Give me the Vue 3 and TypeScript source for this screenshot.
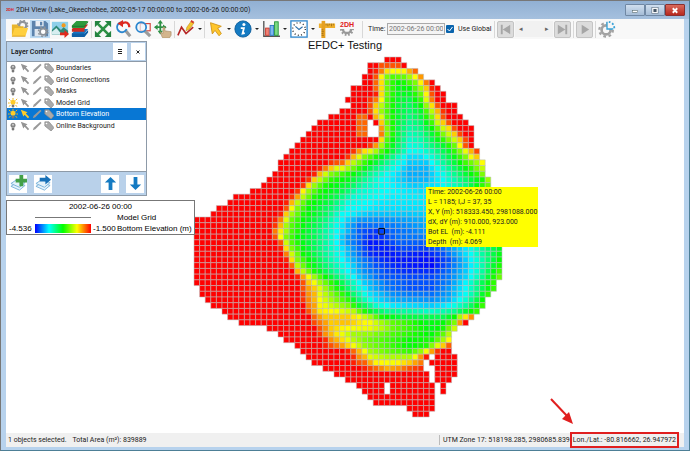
<script setup lang="ts">
import { computed, ref } from 'vue'

interface Cell { x: number; y: number; fill: string }
interface Layer { name: string; visible: boolean; active: boolean }

const useGlobal = ref(true)
const time = ref('2002-06-26 00:00')
const selected = ref('Bottom Elevation')

const layers = ref<Layer[]>([
  { name: 'Boundaries', visible: false, active: false },
  { name: 'Grid Connections', visible: false, active: false },
  { name: 'Masks', visible: false, active: false },
  { name: 'Model Grid', visible: true, active: false },
  { name: 'Bottom Elevation', visible: true, active: true },
  { name: 'Online Background', visible: false, active: false },
])

const readout = [
  'Time: 2002-06-26 00:00',
  'L = 1185; I,J = 37, 35',
  'X, Y (m): 518333.450, 2981088.000',
  'dX, dY (m): 910.000, 923.000',
  'Bot EL  (m): -4.111',
  'Depth  (m): 4.069',
]

// One line per grid row: first column, last column, then column:elevation stops (0 = deepest, 100 = shallowest).
const rows = `34 36 34:100
31 37 32:100 33:92 36:92 37:100
31 39 31:100 32:97 33:88 34:78 35:75 37:76 38:83 39:90
30 40 31:100 32:92 33:76 34:62 35:58 37:60 38:66 39:75 40:85
30 42 31:100 32:90 33:78 34:60 35:54 36:50 37:52 39:62 40:76 41:88 42:100
28 43 31:100 32:90 33:78 34:60 36:48 38:50 40:66 41:80 42:97 43:100
28 44 31:100 32:97 33:78 34:60 36:47 38:47 40:60 41:76 42:92 43:100
27 44 30:100 31:95 32:88 33:75 34:58 36:46 38:43 40:55 41:72 42:88 43:100
28 46 30:100 31:93 32:80 33:68 34:58 36:45 38:41 40:50 42:78 43:92 44:100
26 46 30:100 31:92 32:78 33:65 34:57 36:45 38:40 40:46 42:68 43:82 44:95 45:100
24 47 28:100 29:90 30:90 31:100 32:82 33:72 34:58 36:46 38:38 40:44 42:62 43:78 44:92 45:100
22 48 28:100 29:90 30:90 31:100 32:100 33:80 34:60 36:44 38:36 40:40 42:56 43:70 44:80 45:92 46:100
21 49 28:100 29:90 30:90 32:90 33:85 34:62 36:43 38:34 40:38 42:50 43:60 44:70 45:78 46:92 47:100
20 49 28:100 29:90 30:90 32:90 33:88 34:62 36:43 38:32 40:35 42:45 44:62 45:70 46:80 47:93 48:100
19 49 32:100 33:78 34:57 36:42 38:30 40:33 42:42 44:54 46:70 47:80 48:93 49:100
18 49 30:100 31:95 32:85 33:66 34:54 36:40 38:28 40:30 42:38 44:46 46:60 47:75 48:92 49:100
17 50 27:100 28:95 29:85 30:78 31:72 32:66 33:57 35:44 38:26 40:27 42:33 45:46 47:62 48:73 49:82 50:93
16 50 26:100 27:95 28:82 29:72 30:62 33:48 36:31 38:22 40:22 43:33 46:48 48:62 49:74 50:80
15 51 23:100 24:95 25:92 26:90 27:80 28:68 30:55 32:45 35:31 38:20 41:20 43:30 46:44 48:56 50:66 51:75
15 51 21:100 22:97 23:88 24:80 25:72 26:72 27:66 28:60 30:48 33:34 36:24 38:18 41:18 43:26 46:40 49:54 51:69
14 51 20:100 21:97 22:82 23:70 24:62 26:56 28:49 31:36 34:26 38:17 41:17 44:27 47:40 50:54 51:62
13 52 19:100 20:95 21:80 22:68 24:54 27:48 30:36 33:26 38:18 41:18 44:26 48:40 51:52 52:65
12 52 18:100 19:95 20:78 21:64 23:52 27:44 30:32 34:25 39:20 43:23 48:37 52:60
10 53 17:100 18:95 19:76 20:64 22:52 26:43 29:30 34:25 40:22 45:27 50:40 53:60
7 53 16:100 17:95 18:84 19:68 21:52 25:42 28:29 34:24 41:23 46:28 53:58
6 53 15:100 16:97 17:82 18:68 20:52 24:42 27:28 33:23 41:23 46:28 53:55
4 54 15:100 16:92 17:74 18:62 20:50 24:39 27:26 33:22 41:22 46:28 54:55
3 54 14:100 15:97 16:80 17:66 19:52 23:41 26:26 31:19 40:20 46:26 54:52
0 54 13:100 14:97 15:88 16:72 17:60 19:50 23:38 26:24 29:15 33:14 40:17 46:25 54:50
0 54 13:100 14:95 15:82 16:66 17:58 19:49 22:40 25:27 27:18 29:11 33:11 38:14 43:19 48:28 54:50
0 54 13:100 14:88 15:77 16:66 17:57 19:48 22:38 25:26 27:18 29:9 32:5 35:10 39:13 43:17 48:26 54:49
0 54 13:100 14:92 15:75 16:62 18:50 21:42 24:30 27:15 29:10 31:4 33:5 36:11 40:12 44:16 48:25 54:48
0 54 14:100 15:92 16:70 17:58 19:48 22:38 24:30 27:15 29:9 31:2 33:3 36:9 40:9 44:14 48:24 54:47
0 54 14:100 15:97 16:78 17:62 19:49 22:38 25:27 28:14 31:3 34:3 37:7 41:6 44:11 48:23 51:35 54:47
0 54 15:100 16:88 17:70 19:51 22:39 25:28 28:15 31:4 34:2 37:4 41:2 44:8 48:22 51:34 54:48
0 54 15:100 16:97 17:78 18:62 20:50 23:37 26:25 29:14 32:6 35:2 39:2 42:1 45:8 48:20 51:33 54:50
0 54 16:100 17:90 18:68 20:52 23:39 26:28 29:16 32:8 35:4 39:2 42:1 45:9 48:19 51:33 54:52
0 54 17:100 18:82 19:68 21:52 24:38 27:25 30:14 34:7 38:4 42:4 45:11 48:20 51:34 54:56
0 54 17:100 18:97 19:84 20:74 21:65 23:50 26:34 29:20 33:9 38:7 42:7 45:12 48:21 51:36 54:60
0 53 18:100 19:92 20:80 21:74 22:66 24:54 27:36 30:20 34:11 38:8 42:8 45:13 48:24 51:42 53:54
1 53 18:100 19:92 20:84 21:80 22:72 24:58 26:46 28:33 31:19 34:12 38:8 42:8 45:15 48:25 51:42 53:55
1 52 18:100 19:95 20:86 21:82 22:73 24:63 26:54 28:39 31:22 35:14 38:12 42:11 45:16 48:26 50:38 52:54
2 51 18:100 19:95 20:87 21:82 22:75 24:66 27:54 29:38 32:22 35:17 42:14 45:18 48:29 51:50
3 51 19:100 20:88 21:84 22:76 24:70 27:62 29:46 32:30 35:23 42:20 45:24 48:34 51:55
5 50 19:100 20:92 21:84 22:77 25:74 28:68 29:60 31:46 34:36 38:34 42:30 46:36 50:55
6 49 20:100 21:90 22:84 23:80 27:80 29:74 31:66 33:52 36:45 40:43 44:42 46:50 47:66 48:77 49:86
8 48 20:100 21:93 23:84 24:80 27:81 29:77 31:74 33:66 35:59 38:54 41:48 44:49 46:62 47:85 48:100
13 46 21:100 22:92 24:80 26:76 28:74 31:73 33:68 35:60 38:55 42:48 44:52 46:70
15 45 21:100 22:95 23:86 25:77 28:66 31:64 35:57 40:51 42:49 44:59 45:68
16 45 22:100 23:96 24:86 26:78 28:68 30:62 35:55 38:50 42:52 44:66 45:75
18 45 22:100 23:97 24:92 26:84 28:74 30:64 34:57 38:49 41:53 43:72 44:80 45:91
19 45 26:100 27:97 28:90 29:82 30:74 31:66 34:60 38:55 40:64 41:74 42:84 43:95 44:100
20 46 27:100 28:96 29:86 30:82 31:72 34:67 38:67 39:74 40:85 41:98 42:100
21 46 27:100 28:97 29:92 30:91 31:83 32:76 35:74 38:80 40:88 42:100
23 46 29:100 30:97 32:90 34:83 36:86 38:92 40:96 42:100
25 46 25:100
27 45 27:100
29 44 29:100
30 44 30:100
31 42 31:100
32 42 32:100
38 42 38:100
39 41 39:100`.split('\n')

// Dry cells inside the lake outline, as row,column.
const dry = new Set([
  '11,31', '12,31', '12,32', '13,31', '13,32', '52,42', '53,41', '54,41', '54,42',
  '55,42', '56,42', '57,34', '58,34', '57,43', '58,43',
])

function elevation(stops: number[][], x: number): number {
  if (x <= stops[0][0]) return stops[0][1]
  for (let i = 1; i < stops.length; i++) {
    const [x1, v1] = stops[i]
    const [x0, v0] = stops[i - 1]
    if (x <= x1) return v0 + ((v1 - v0) * (x - x0)) / (x1 - x0)
  }
  return stops[stops.length - 1][1]
}

const cells = computed<Cell[]>(() =>
  rows.flatMap((line, y) => {
    const [first, last, ...rest] = line.split(' ')
    const stops = rest.map(s => s.split(':').map(Number))
    const out: Cell[] = []
    for (let x = Number(first); x <= Number(last); x++) {
      if (dry.has(`${y},${x}`)) continue
      const hue = 240 - 2.4 * elevation(stops, x)
      out.push({ x, y, fill: `hsl(${hue.toFixed(0)} 100% 50%)` })
    }
    return out
  }),
)
</script>

<template>
  <div class="window">
    <header class="titlebar">
      <span class="logo">2DH</span>
      <h1>2DH View (Lake_Okeechobee, 2002-05-17 00:00:00 to 2002-06-26 00:00:00)</h1>
      <div class="winbtns">
        <button aria-label="Minimize"><svg viewBox="0 0 20 10"><rect x="7" y="5" width="6" height="2" fill="#fff" stroke="#566" stroke-width=".6" /></svg></button>
        <button aria-label="Maximize"><svg viewBox="0 0 20 10"><rect x="7.500" y="2.500" width="5" height="5" fill="#456" stroke="#fff" stroke-width="1.500" /><rect x="6.500" y="1.500" width="7" height="7" fill="none" stroke="#567" stroke-width=".6" /></svg></button>
        <button class="close" aria-label="Close"><svg viewBox="0 0 20 10"><path d="M7.500 2.500l5 5m0-5l-5 5" stroke="#fff" stroke-width="2" /></svg></button>
      </div>
    </header>

    <div class="toolbar">
      <button class="tool" aria-label="Open">
        <svg viewBox="0 0 20 20"><circle cx="13" cy="6" r="4" fill="none" stroke="#909498" stroke-width="2.500" /><circle cx="13" cy="6" r="5.600" fill="none" stroke="#909498" stroke-width="1.500" stroke-dasharray="2 2.400" /><path d="M1 17V5h6l1.500 2H14v3" fill="#e9b52c" /><path d="M1 18L4 9h15l-3 9z" fill="#ffcf3e" /><path d="M1 18h15" stroke="#d79b1a" /></svg>
      </button>
      <button class="tool on" aria-label="Save">
        <svg viewBox="0 0 20 20"><path d="M1 1h15l3 3v14H1z" fill="#5b83ad" /><rect x="5" y="1" width="9" height="6" fill="#e8eef5" /><rect x="10" y="2" width="2.500" height="4" fill="#5b83ad" /><rect x="4" y="10" width="12" height="8" fill="#dde6ef" /><circle cx="13.500" cy="13" r="3.500" fill="#fff" stroke="#8b9299" stroke-width="2" /><circle cx="13.500" cy="13" r="5.300" fill="none" stroke="#8b9299" stroke-width="1.500" stroke-dasharray="2 2.200" /></svg>
      </button>
      <button class="tool" aria-label="Export image">
        <svg viewBox="0 0 20 20"><path d="M1 2h18v14H1z" fill="#8fd0ea" /><circle cx="14" cy="6" r="2.300" fill="#f59a1d" /><path d="M1 16v-5l5-5 5 5 3-3 5 4v4z" fill="#2f8a78" /><path d="M1 13l5-4 6 7H1z" fill="#d7eef0" /><path d="M10 14h5v-3l5 4.500-5 4.500v-3h-5z" fill="#e0281c" /></svg>
      </button>
      <button class="tool" aria-label="Layers">
        <svg viewBox="0 0 20 20"><path d="M1 15l5-5h13l-4 5v3H1z" fill="#1676c4" /><path d="M1 15h14l4-4v3l-4 5H1z" fill="#0d5ea5" /><path d="M1 10l5-5h13l-4 5v3H1z" fill="#c92d23" /><path d="M1 6l5-5h13l-4 6v2H1z" fill="#2d9a3d" /><path d="M1 7h14l4-5" fill="none" stroke="#1b7430" /></svg>
      </button>
      <i class="sep"></i>
      <button class="tool" aria-label="Fit view">
        <svg viewBox="0 0 20 20"><path d="M4 4l12 12M16 4L4 16" stroke="#2d9145" stroke-width="3" /><path d="M1 1h7L1 8zM19 1v7l-7-7zM1 19v-7l7 7zM19 19h-7l7-7z" fill="#238340" /></svg>
      </button>
      <button class="tool" aria-label="Zoom previous">
        <svg viewBox="0 0 20 20"><path d="M13 12l5 6" stroke="#9b9b9b" stroke-width="3.500" /><path d="M11 3a5.500 5.500 0 1 0 3 7" fill="none" stroke="#2b86cf" stroke-width="2" /><path d="M9 4c4-3 8-1 8 4" fill="none" stroke="#dd281e" stroke-width="2.500" /><path d="M10 0v8L4 4z" fill="#dd281e" /></svg>
      </button>
      <button class="tool" aria-label="Zoom window">
        <svg viewBox="0 0 20 20"><rect x="7" y="4" width="11" height="8" fill="none" stroke="#d5483f" stroke-width="1.300" /><path d="M12 12l6 6" stroke="#9b9b9b" stroke-width="3.500" /><circle cx="8" cy="8" r="5.500" fill="#eef6fc" fill-opacity=".7" stroke="#2b86cf" stroke-width="2" /></svg>
      </button>
      <button class="tool" aria-label="Pan">
        <svg viewBox="0 0 20 20"><path d="M7 2v12M1 8h12" stroke="#2d9145" stroke-width="2" /><path d="M7 0l3 4H4zM7 16l3-4H4zM0 8l4-3v6zM14 8l-4-3v6z" fill="#2d9145" /><path d="M9 19l-2-6 3 2V8l2 0v4l7 1v4l-2 3h-7z" fill="#d3b58d" stroke="#a98c68" stroke-width=".7" /></svg>
      </button>
      <i class="sep"></i>
      <button class="tool" aria-label="Draw polyline">
        <svg viewBox="0 0 20 20"><path d="M1 17L5 8l5 7 8-7" fill="none" stroke="#b52525" stroke-width="1.800" /><path d="M10 12l1-4 5-7 3 2-5 7z" fill="#f5c52c" stroke="#b88718" stroke-width=".6" /><path d="M15 2l1-2 3 2-1 2z" fill="#d33a2f" /></svg>
      </button>
      <button class="drop" aria-label="Polyline options"></button>
      <i class="sep tight"></i>
      <button class="tool" aria-label="Select">
        <svg viewBox="0 0 20 20"><path d="M5 3l12 4-4 2 4 6-2.500 2.500-4.500-6-3 4z" fill="#ffc62b" stroke="#cf941a" /></svg>
      </button>
      <button class="drop" aria-label="Select options"></button>
      <button class="tool" aria-label="Information">
        <svg viewBox="0 0 20 20"><circle cx="10" cy="10" r="9" fill="#147ac2" stroke="#0b5c9b" /><circle cx="11" cy="5" r="1.700" fill="#fff" /><path d="M7.500 9h3.500l-1.500 6 2.500-.5" fill="none" stroke="#fff" stroke-width="2" /></svg>
      </button>
      <button class="drop" aria-label="Information options"></button>
      <button class="tool" aria-label="Charts">
        <svg viewBox="0 0 20 20"><path d="M2 1v17h18" fill="none" stroke="#555" stroke-width="1.500" /><rect x="4" y="9" width="4" height="8" fill="#ef8376" stroke="#c7372b" /><rect x="9" y="6" width="4" height="11" fill="#7eb7ef" stroke="#2675c4" /><rect x="14" y="2" width="4" height="15" fill="#7ddb83" stroke="#239138" /></svg>
      </button>
      <button class="drop" aria-label="Chart options"></button>
      <button class="tool" aria-label="Clock">
        <svg viewBox="0 0 20 20"><rect x="1" y="1" width="18" height="18" fill="#fff" stroke="#3389cf" stroke-width="1.500" /><circle cx="10" cy="10" r="7" fill="none" stroke="#333" stroke-width="1.600" stroke-dasharray="1.100 2.565" /><path d="M6 7l4 3.500 4-3" fill="none" stroke="#2c6ea8" stroke-width="1.200" /></svg>
      </button>
      <button class="drop" aria-label="Clock options"></button>
      <button class="tool" aria-label="Measure">
        <svg viewBox="0 0 20 20"><path d="M1 4h18v5H8v11H4V9H1z" fill="#efaf2b" /><path d="M4 1h4v19H4z" fill="#e6a020" /><path d="M9 4v2m2-2v3m2-3v2m2-2v3m2-3v2M4 11h2m-2 2h2.500M4 15h2m-2 2h2.500" stroke="#8f6210" stroke-width=".8" /></svg>
      </button>
      <button class="tool settings" aria-label="2DH settings">
        <b>2DH</b>
        <svg viewBox="0 0 20 11"><path d="M5 0a5 5 0 0 0 10 0" fill="none" stroke="#999" stroke-width="3" /><path d="M3 0a7 7 0 0 0 14 0" fill="none" stroke="#999" stroke-width="3" stroke-dasharray="2 2" /></svg>
      </button>
      <i class="sep wide"></i>
      <label class="time" for="time">Time:</label>
      <input id="time" v-model="time" class="timebox" type="text">
      <label class="global"><input v-model="useGlobal" type="checkbox"><svg viewBox="0 0 8 8"><path d="M1.500 4l2 2 3-4" fill="none" stroke="#fff" /></svg>Use Global</label>
      <i class="sep"></i>
      <button class="play" aria-label="First"><svg viewBox="0 0 16 16"><path d="M3 3h2v10H3zM13 3v10L5 8z" /></svg></button>
      <div class="scroll"><button aria-label="Step back">◂</button><button aria-label="Step forward">▸</button></div>
      <button class="play" aria-label="Last"><svg viewBox="0 0 16 16"><path d="M3 3l8 5-8 5zM11 3h2v10h-2z" /></svg></button>
      <i class="sep"></i>
      <button class="play" aria-label="Play"><svg viewBox="0 0 16 16"><path d="M5 3l8 5-8 5z" /></svg></button>
      <i class="sep"></i>
      <button class="tool" aria-label="Animation settings">
        <svg viewBox="0 0 20 20"><circle cx="9" cy="11" r="5" fill="none" stroke="#a2a2a2" stroke-width="3" /><circle cx="9" cy="11" r="7.500" fill="none" stroke="#a2a2a2" stroke-width="2.500" stroke-dasharray="3 2.900" /><path d="M10 0h10v10H10z" fill="#f6f6f6" /><path d="M10 2v8h7" fill="none" stroke="#37a2d8" stroke-width="1.500" /><path d="M12 2a7 7 0 0 1 6 8" fill="none" stroke="#37a2d8" stroke-width="2" stroke-dasharray="2 2" /></svg>
      </button>
    </div>

    <main class="canvas">
      <section class="plot">
        <h2>EFDC+ Testing</h2>
        <svg class="grid" viewBox="0 0 55 63" preserveAspectRatio="none" role="img" aria-label="Bottom elevation grid">
          <rect v-for="c in cells" :key="`${c.x}-${c.y}`" :x="c.x" :y="c.y" width="1" height="1" :fill="c.fill" />
          <rect class="picked" x="33" y="30" width="1" height="1" />
        </svg>
      </section>

      <div class="readout"><p v-for="line in readout" :key="line">{{ line }}</p></div>

      <aside class="panels">
        <section class="layers">
          <header>
            <h3>Layer Control</h3>
            <button aria-label="Menu"><svg viewBox="0 0 6 6"><path d="M1 .5h4M1 2.500h4M1 4.500h4" stroke="#222" /></svg></button>
            <button aria-label="Close panel"><svg viewBox="0 0 6 6"><path d="M1.500 1.500l3 3m0-3l-3 3" stroke="#222" /></svg></button>
          </header>
          <ul>
            <li v-for="l in layers" :key="l.name" :class="{ selected: l.name === selected }" @click="selected = l.name">
              <svg viewBox="0 0 12 12">
                <path v-if="l.visible" d="M6 0v2M1 1l2 2M11 1L9 3M0 6h2M10 6h2M1 10l2-1M11 10L9 9" stroke="#efb51e" stroke-width="1.200" />
                <circle cx="6" cy="5" r="3" :fill="l.visible ? '#ffcb28' : '#858585'" /><circle v-if="!l.visible" cx="6" cy="4.500" r="1.200" fill="#ccc" />
                <path d="M4.500 8h3v2L6 12l-1.500-2z" fill="#777" />
              </svg>
              <svg viewBox="0 0 12 12"><path d="M1 1l8 3-2 1.500 4 4-1.500 1.500-4-4L4 9z" :fill="l.active ? '#ffcc26' : '#949494'" /></svg>
              <svg viewBox="0 0 12 12"><path d="M1 11l1-3 8-7 1.500 1.500L4 10z" fill="#999" /></svg>
              <svg viewBox="0 0 12 12"><path d="M1 1h5l6 7-3.500 4L1 6z" fill="#aaa" stroke="#888" stroke-width=".8" /><circle cx="3" cy="3" r="1" fill="#fff" /></svg>
              <span>{{ l.name }}</span>
            </li>
          </ul>
          <footer>
            <button aria-label="Add layer"><svg viewBox="0 0 18 18"><path d="M1 12l6-4 9 3-6 5z" fill="#e4f2fb" stroke="#79b3da" /><path d="M1 9l6-4 9 3-6 5z" fill="#e4f2fb" stroke="#79b3da" /><path d="M10 0h4v4h4v4h-4v4h-4V8H6V4h4z" fill="#43a047" /></svg></button>
            <button aria-label="Export layer"><svg viewBox="0 0 18 18"><path d="M1 12l6-4 9 3-6 5z" fill="#e4f2fb" stroke="#79b3da" /><path d="M1 9l6-4 9 3-6 5z" fill="#e4f2fb" stroke="#79b3da" /><path d="M5 3h6V0l6 5-6 5V7H5z" fill="#1670b8" /></svg></button>
            <i class="gap"></i>
            <button aria-label="Move up"><svg viewBox="0 0 18 18"><path d="M9 2l6 6h-4v8H7V8H3z" fill="#147ac2" /></svg></button>
            <button aria-label="Move down"><svg viewBox="0 0 18 18"><path d="M9 16l6-6h-4V2H7v8H3z" fill="#147ac2" /></svg></button>
          </footer>
        </section>

        <section class="legend">
          <p class="stamp">2002-06-26 00:00</p>
          <i class="line"></i><span class="name">Model Grid</span>
          <span class="low">-4.536</span><i class="ramp"></i><span>-1.500</span><span>Bottom Elevation (m)</span>
        </section>
      </aside>
    </main>

    <footer class="status">
      <span>1 objects selected.</span>
      <span class="area">Total Area (m²): 839889</span>
      <span class="utm">UTM Zone 17: 518198.285, 2980685.839</span>
      <span class="lonlat">Lon./Lat.: -80.816662, 26.947972
        <svg class="pointer" viewBox="0 0 24 27"><path d="M1 1l17 18" stroke="#e01f1f" stroke-width="2" /><path d="M23 26l-11-5 7-7z" fill="#e01f1f" /></svg>
      </span>
    </footer>
  </div>
</template>

<style>
body { margin: 0; }
</style>

<style scoped>
* { box-sizing: border-box; }
h1, h2, h3, p, ul { margin: 0; padding: 0; font-weight: 400; }
button { padding: 0; border: 0; background: none; font: inherit; color: inherit; }
svg { display: block; }
.window {
  display: flex; flex-direction: column; min-height: 100vh;
  padding: 0 5px 3px; border: 1px solid #4d7f96; border-top-color: #777; border-left-color: #777;
  background: #b7d2ed; color: #222; font: 7px/10px Roboto, "Noto Sans", sans-serif;
}
.titlebar {
  display: flex; align-items: center; gap: 2px; height: 18px; margin: 0 -5px; padding: 0 4px 0 5px;
  background: linear-gradient(#91b0d3, #a5c0de);
}
.titlebar h1 { flex: 1; font-size: 7px; white-space: nowrap; }
.logo { width: 8px; overflow: hidden; color: #d22; font-size: 4px; font-weight: 700; }
.winbtns { display: flex; align-self: flex-start; padding-top: 3px; }
.winbtns button { width: 20px; height: 12px; border: 1px solid #7088a4; border-radius: 1px; background: linear-gradient(#d0dfef, #a4bcd6); }
.winbtns .close { border-color: #8a3030; background: linear-gradient(#d96a5c, #b8281e); }
.toolbar {
  display: flex; align-items: center; height: 20px; padding: 0 2px 0 4px;
  background: #f8f8f8; white-space: nowrap;
}
.tool { flex: none; width: 20px; height: 18px; padding: 0 1px; }
.tool svg { width: 18px; height: 18px; }
.tool.on { background: #bcdcf5; }
.drop { flex: none; width: 8px; height: 18px; }
.drop::after { content: ""; display: block; width: 0; margin: 0 auto; border: 2px solid transparent; border-top-color: #222; border-bottom: 0; }
.sep { flex: none; width: 1px; height: 17px; margin: 0 1px; background: #d8d8d8; }
.sep.tight { margin: 0; }
.sep.wide { margin: 0 5px; }
.settings b { display: block; color: #e02020; font: 700 7px/8px "Liberation Sans", sans-serif; }
.settings svg { height: 9px; }
.time { width: 19px; }
.timebox { width: 58px; height: 12px; padding: 0 1px; border: 1px solid #aaa; background: #f4f4f4; color: #777; font: inherit; }
.global { position: relative; display: flex; align-items: center; gap: 4px; padding: 0 1px; }
.global input { appearance: none; width: 8px; height: 8px; margin: 0; border-radius: 1px; background: #fff; }
.global input:checked { background: #0a64ad; }
.global svg { position: absolute; left: 1px; width: 8px; height: 8px; pointer-events: none; }
.play { flex: none; width: 17px; height: 17px; margin: 0 1px; border: 1px solid #c4c4c4; border-radius: 2px; background: #dcdcdc; }
.play svg { width: 15px; height: 15px; fill: #a6a6a6; }
.scroll { display: flex; justify-content: space-between; width: 38px; padding: 0 4px; color: #666; background: #f1f1f1; line-height: 16px; }
.canvas { position: relative; flex: 1; background: #fff; }
.plot { display: flex; flex-direction: column; align-items: center; padding-left: 5px; }
.plot h2 { padding-right: 5px; color: #111; font: 11px/12px "Liberation Sans", sans-serif; }
.grid { width: 308px; height: 360px; margin-top: 6px; overflow: visible; }
.grid rect { stroke: #bebebe; stroke-opacity: .55; stroke-width: 1px; vector-effect: non-scaling-stroke; }
.grid .picked { fill: none; stroke: #000; stroke-opacity: 1; }
.readout { position: absolute; top: 148px; left: calc(50% + 81px); width: 112px; padding: 0 2px; background: #ff0; white-space: pre; line-height: 10px; }
.panels { position: absolute; top: 2px; left: 0; }
.layers { width: 141px; border: 1px solid #8d9aa8; background: #fff; }
.layers header { display: flex; align-items: center; gap: 4px; height: 20px; padding: 0 1px 0 4px; border-bottom: 1px solid #8d9aa8; background: #b9d1ea; }
.layers h3 { flex: 1; color: #111; font-size: 7px; font-weight: 500; }
.layers header button { display: grid; place-items: center; width: 14px; height: 17px; background: #fff; }
.layers header svg { width: 6px; height: 6px; }
.layers ul { height: 109px; list-style: none; }
.layers li { display: flex; align-items: center; gap: 2px; height: 12px; padding-left: 1px; }
.layers li:nth-child(2n) { height: 11px; }
.layers li svg { width: 10px; height: 10px; }
.layers li.selected { background: #0877d4; color: #fff; }
.layers footer { display: flex; align-items: center; gap: 7px; height: 24px; padding: 0 2px; border-top: 1px solid #8d9aa8; background: #b9d1ea; }
.layers footer button { display: grid; place-items: center; width: 18px; height: 18px; background: #fff; }
.layers footer svg { width: 17px; height: 17px; }
.gap { flex: 1; }
.legend {
  display: grid; grid-template-columns: 24px 56px 22px auto; column-gap: 2px; align-items: center;
  width: 189px; margin-top: 4px; padding: 0 2px; border: 1px solid #777; background: #fff; color: #000;
  font: 8px/11px "Liberation Sans", sans-serif; white-space: nowrap;
}
.stamp { grid-column: 1 / -1; text-align: center; }
.line { grid-column: 2; height: 1px; background: #777; }
.name { grid-column: 4; }
.ramp { height: 9px; background: linear-gradient(90deg, #00f, #0ff, #0f0, #ff0, #f00); }
.status { display: flex; align-items: center; height: 14px; padding-left: 2px; background: #f0f0f0; white-space: nowrap; }
.area { margin-left: 6px; }
.utm { margin-left: auto; padding: 0 1px 0 3px; border-left: 1px solid #bbb; }
.lonlat { position: relative; margin-right: 6px; padding: 2px; outline: 2px solid #e01f1f; outline-offset: -1px; }
.pointer { position: absolute; right: 104px; bottom: 22px; width: 24px; height: 27px; }
</style>
